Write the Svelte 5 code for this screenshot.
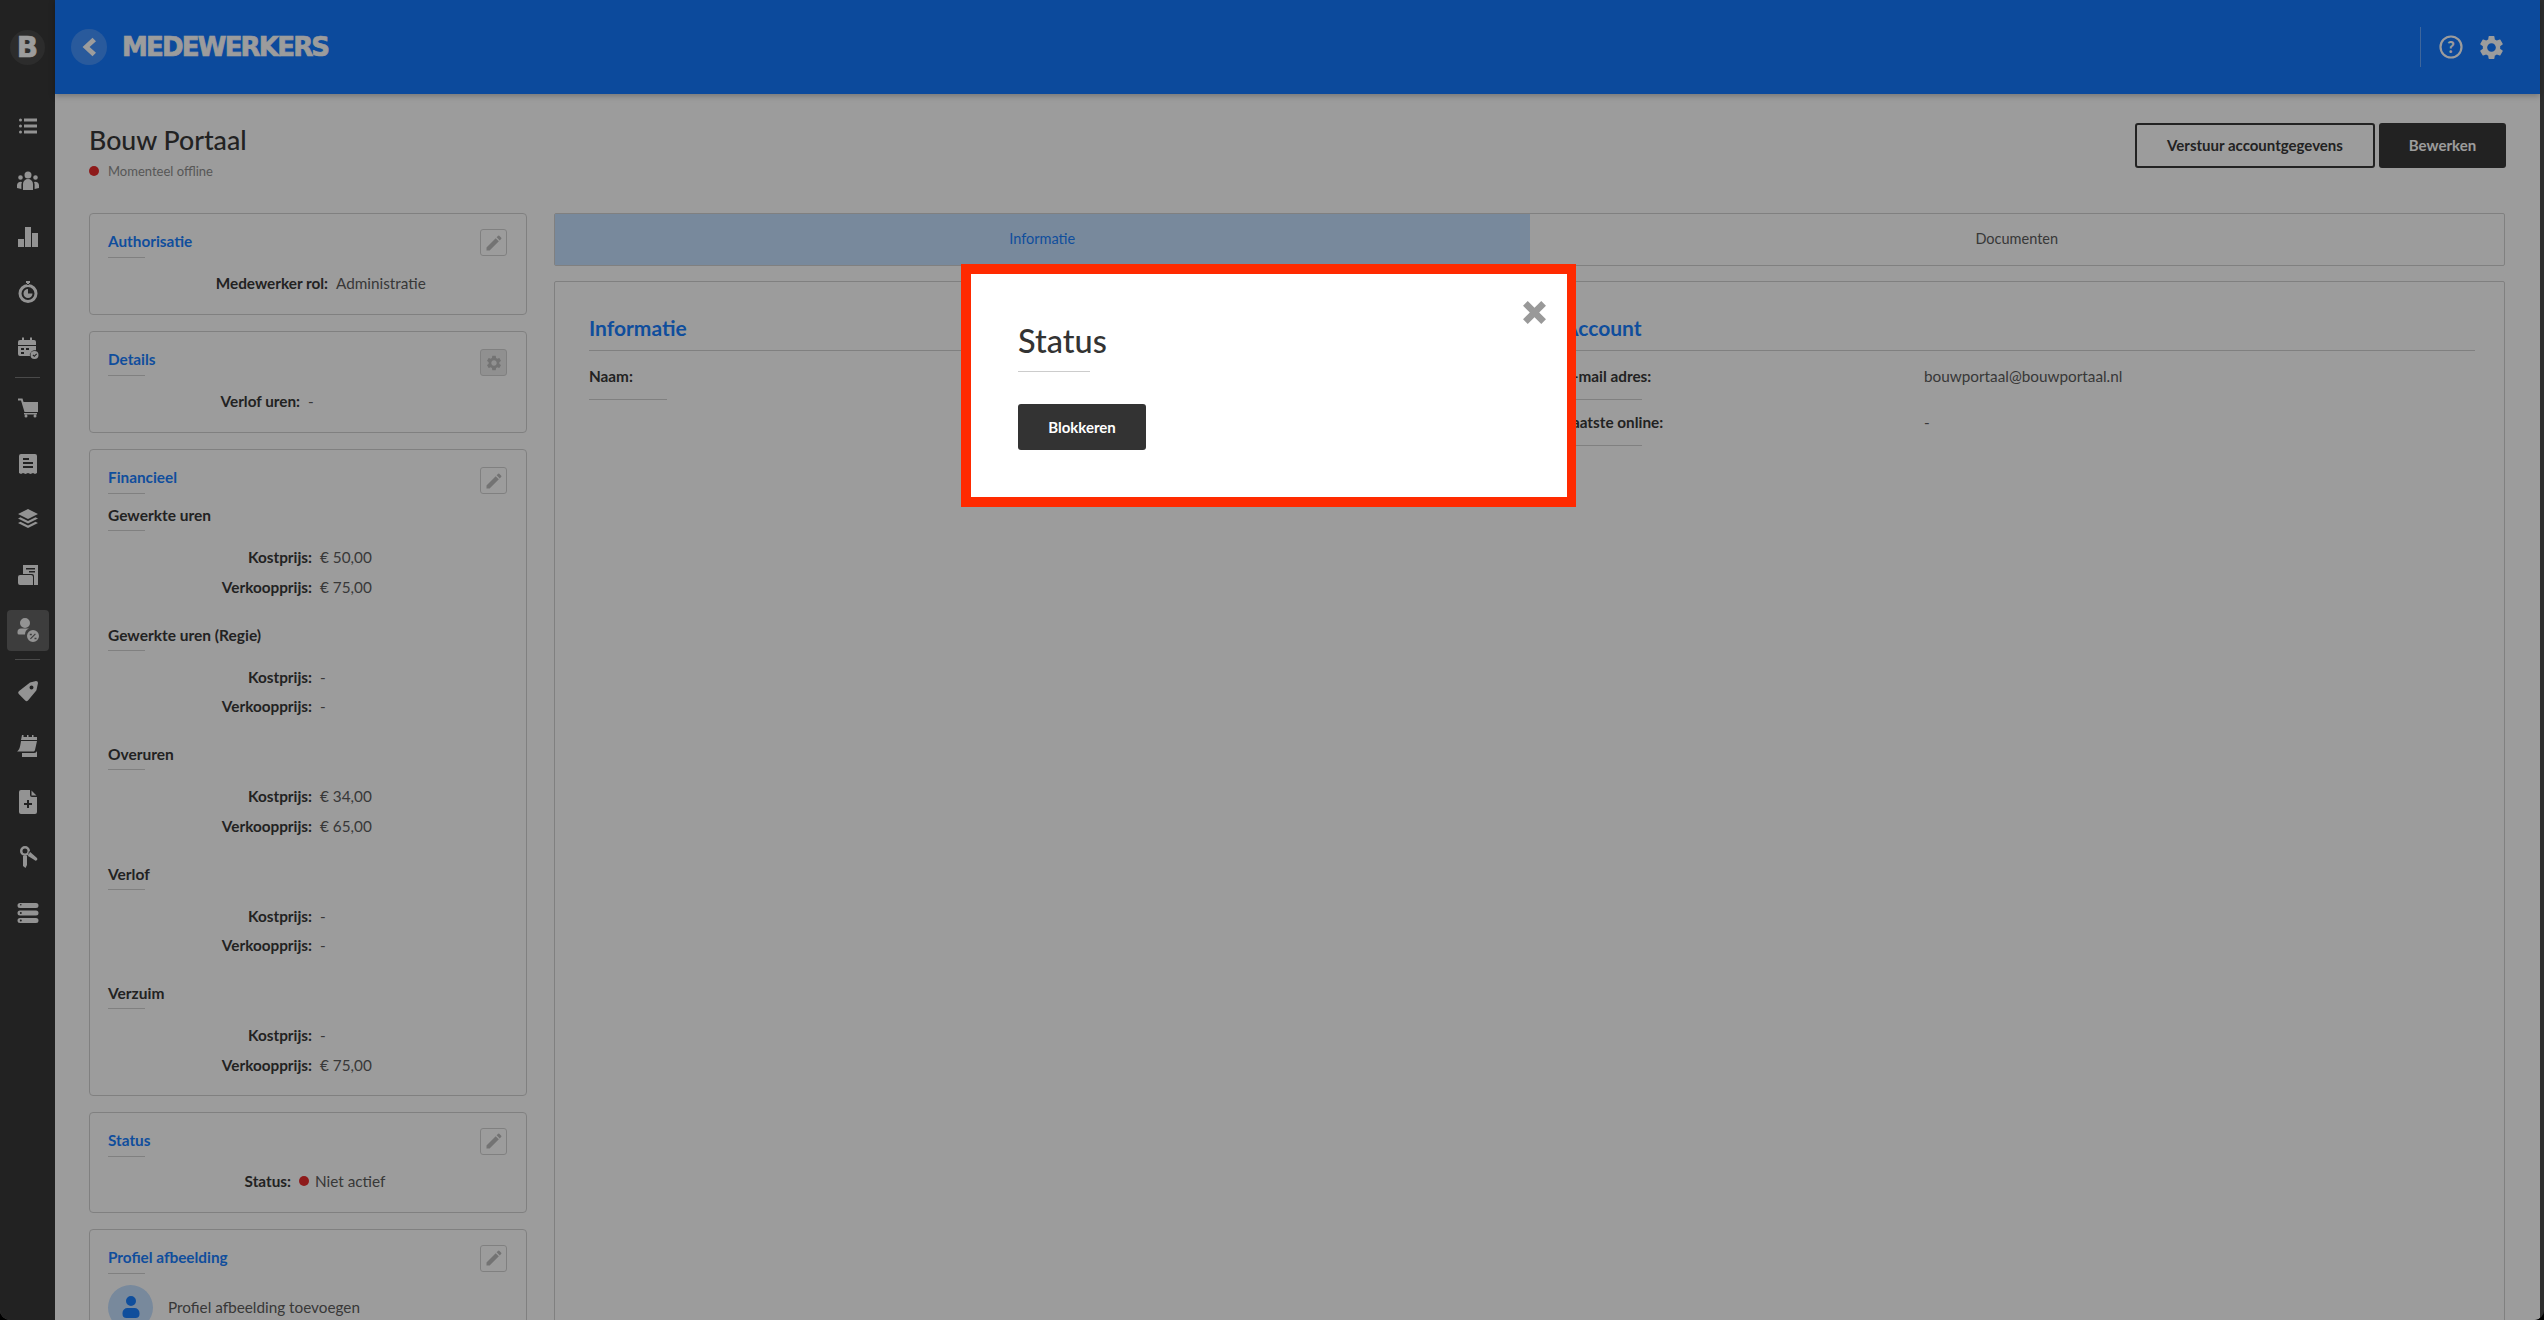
<script>
  const pencil = "M3 17.25V21h3.75L17.81 9.94l-3.75-3.75L3 17.25zM20.71 7.04a1 1 0 0 0 0-1.41l-2.34-2.34a1 1 0 0 0-1.41 0l-1.83 1.83 3.75 3.75 1.83-1.83z";
  const gear = "M19.14 12.94c.04-.3.06-.61.06-.94 0-.32-.02-.64-.07-.94l2.03-1.58c.18-.14.23-.41.12-.61l-1.92-3.32c-.12-.22-.37-.29-.59-.22l-2.39.96c-.5-.38-1.03-.7-1.62-.94l-.36-2.54c-.04-.24-.24-.41-.48-.41h-3.84c-.24 0-.43.17-.47.41l-.36 2.54c-.59.24-1.13.57-1.62.94l-2.39-.96c-.22-.08-.47 0-.59.22L2.74 8.87c-.12.21-.08.47.12.61l2.03 1.58c-.05.3-.09.63-.09.94s.02.64.07.94l-2.03 1.58c-.18.14-.23.41-.12.61l1.92 3.32c.12.22.37.29.59.22l2.39-.96c.5.38 1.03.7 1.62.94l.36 2.54c.05.24.24.41.48.41h3.84c.24 0 .44-.17.47-.41l.36-2.54c.59-.24 1.13-.56 1.62-.94l2.39.96c.22.08.47 0 .59-.22l1.92-3.32c.12-.22.07-.47-.12-.61l-2.01-1.58zM12 15.6c-1.98 0-3.6-1.62-3.6-3.6s1.62-3.6 3.6-3.6 3.6 1.62 3.6 3.6-1.62 3.6-3.6 3.6z";

  const group1 = [
    "M3 6a1.5 1.5 0 1 0 3 0a1.5 1.5 0 1 0-3 0zM3 12a1.5 1.5 0 1 0 3 0a1.5 1.5 0 1 0-3 0zM3 18a1.5 1.5 0 1 0 3 0a1.5 1.5 0 1 0-3 0zM8 4.5h13v3H8zM8 10.5h13v3H8zM8 16.5h13v3H8z",
    "M8.5 6a3.5 3.5 0 1 0 7 0a3.5 3.5 0 1 0-7 0zM7 21v-6a5 5 0 0 1 10 0v6zM2.2 8.5a2.3 2.3 0 1 0 4.6 0a2.3 2.3 0 1 0-4.6 0zM17.2 8.5a2.3 2.3 0 1 0 4.6 0a2.3 2.3 0 1 0-4.6 0zM1 19v-3a3.5 3.5 0 0 1 5-3a7 7 0 0 0-.6 2.5V20zM23 19v-3a3.5 3.5 0 0 0-5-3a7 7 0 0 1 .6 2.5V20z",
    "M2 14h6v8H2zM9 2h6v20H9zM16 8h6v14h-6z",
    "M10 1h4v2h-1v2h-2V3h-1zM2.5 13.500a9.500 9.500 0 1 0 19 0a9.500 9.500 0 1 0-19 0zM5.500 13.500a6.500 6.500 0 1 1 13 0a6.500 6.500 0 1 1-13 0zM12 13.500h4.500a4.500 4.500 0 1 1-4.500-4.500z",
    "M4 4h2V1.500h2V4h6V1.500h2V4h2a2 2 0 0 1 2 2v3H2V6a2 2 0 0 1 2-2zM2 10h18v4.300a5 5 0 0 0-6 5.700H4a2 2 0 0 1-2-2zM5 12v2h3v-2zM5 16v2h3v-2zM10 12v2h3v-2zM14.500 19a4 4 0 1 0 8 0a4 4 0 1 0-8 0zM16.500 19.300l.8-.8 1 1 2-2 .8.8-2.800 2.800z"
  ];
  const group2 = [
    "M2 2.500h4.500L7.500 6H22v10H8.500L5 4.500H2zM8 17h13v1.500H8zM8.500 20a1.500 1.500 0 1 0 3 0a1.500 1.500 0 1 0-3 0zM17.500 20a1.500 1.500 0 1 0 3 0a1.500 1.500 0 1 0-3 0z",
    "M5 2h14a2 2 0 0 1 2 2v17l-2 1-2-1-2.500 1-2.500-1-2.500 1L7 21l-2 1-2-1V4a2 2 0 0 1 2-2zM7 6v2h6V6zM7 10v2h10v-2zM7 14v2h10v-2z",
    "M12 2l10 5-10 5L2 7zM2 11.500l2.500-1.200L12 14l7.500-3.700L22 11.500l-10 5zM2 16l2.500-1.200L12 18.500l7.500-3.700L22 16l-10 5z",
    "M7 2h15v20h-4V13a2 2 0 0 0-2-2H7zM10 5v1.500h9V5zM13 8v1.500h6V8zM2 14a2 2 0 0 1 2-2h11a2 2 0 0 1 2 2v8H4a2 2 0 0 1-2-2z",
    "M4 5a5 5 0 1 0 10 0a5 5 0 1 0-10 0zM1.500 14a3.500 3.500 0 0 1 3.500-3.500h8a6.500 6.500 0 0 0-4 6H3a1.500 1.500 0 0 1-1.500-1.500zM11 18a6 6 0 1 0 12 0a6 6 0 1 0-12 0zM14 20.500l5-5 .8.8-5 5zM13.800 15.800h2v1.500h-2zM18.500 19.800h2v1.500h-2z"
  ];
  const group3 = [
    "M14 3.500L20 2a2 2 0 0 1 2 2l-1.500 7a2 2 0 0 1-.6 1L12 21.500a2 2 0 0 1-2.800 0L2.800 15a2 2 0 0 1 0-2.800zM13.500 8.500a2 2 0 1 0 4 0a2 2 0 1 0-4 0z",
    "M6 1h1.500v2H11V1h1.500v2H16V1h1.500v2H21v3H5zM5 7h16l-2 9c-.3 1-1 1.500-2 1.500H1c2-1.500 3-3 4-10.500zM6 19h12c1.500 0 2.500-1 3-2v6H6z",
    "M5 0h9v5a2 2 0 0 0 2 2h5v15a2 2 0 0 1-2 2H5a2 2 0 0 1-2-2V2a2 2 0 0 1 2-2zM15.500 .5l5 5h-5zM11 10v3H8v2h3v3h2v-3h3v-2h-3v-3z",
    "M4 6a5 5 0 1 0 10 0a5 5 0 1 0-10 0zM6.500 6a2.500 2.500 0 1 1 5 0a2.500 2.500 0 1 1-5 0zM7 11h4v9l-1.500 3L7 21zM13 6l8 7a1.500 1.500 0 0 1-2.500 2L12 11z",
    "M4 2h16a2.500 2.500 0 0 1 0 5H4a2.500 2.500 0 0 1 0-5zM4 3.700a.8.8 0 1 0 1.600 0a.8.8 0 1 0-1.600 0zM4 9.500h16a2.500 2.500 0 0 1 0 5H4a2.500 2.500 0 0 1 0-5zM3.800 12a1 1 0 1 0 2 0a1 1 0 1 0-2 0zM4 17h16a2.500 2.500 0 0 1 0 5H4a2.500 2.500 0 0 1 0-5zM3.800 19.500a1 1 0 1 0 2 0a1 1 0 1 0-2 0z"
  ];
  const groups = [group1, group2, group3];
  const activeIcon = group2[4];

  const finance = [
    { title: "Gewerkte uren", cost: "€ 50,00", sale: "€ 75,00" },
    { title: "Gewerkte uren (Regie)", cost: "-", sale: "-" },
    { title: "Overuren", cost: "€ 34,00", sale: "€ 65,00" },
    { title: "Verlof", cost: "-", sale: "-" },
    { title: "Verzuim", cost: "-", sale: "€ 75,00" }
  ];
</script>

<div class="root">
  <aside class="side">
    <div class="brand"><span class="logo">B</span></div>
    <nav class="nav">
      {#each groups as group, g}
        {#if g > 0}<div class="divider"></div>{/if}
        {#each group as d}
          <div class="navitem">
            <span class="navbtn" class:active={d === activeIcon}>
              <svg viewBox="0 0 24 24" width="24" height="24"><path fill-rule="evenodd" {d} /></svg>
            </span>
          </div>
        {/each}
      {/each}
    </nav>
  </aside>

  <div class="main">
    <header class="top">
      <span class="back">
        <svg viewBox="0 0 24 24" width="28" height="28"><path d="M15 4l3 3-5.500 5 5.500 5-3 3-8.500-8z" /></svg>
      </span>
      <span class="apptitle">MEDEWERKERS</span>
      <span class="topright">
        <svg class="help" viewBox="0 0 24 24" width="24" height="24">
          <circle cx="12" cy="12" r="10.500" />
          <text x="12" y="17.500">?</text>
        </svg>
        <svg class="gear" viewBox="0 0 24 24" width="29" height="29"><path d={gear} /></svg>
      </span>
    </header>

    <div class="content">
      <div class="pagehead">
        <div>
          <h1>Bouw Portaal</h1>
          <div class="offline"><span class="dot"></span>Momenteel offline</div>
        </div>
        <div class="actions">
          <button class="btn outline">Verstuur accountgegevens</button>
          <button class="btn solid">Bewerken</button>
        </div>
      </div>

      <div class="columns">
        <div class="leftcol">
          <section class="card">
            <span class="iconbtn"><svg viewBox="0 0 24 24" width="20" height="20"><path d={pencil} /></svg></span>
            <h3>Authorisatie</h3>
            <div class="rule"></div>
            <div class="row auth"><b>Medewerker rol:</b><span>Administratie</span></div>
          </section>

          <section class="card">
            <span class="iconbtn filled lower"><svg viewBox="0 0 24 24" width="18" height="18"><path d={gear} /></svg></span>
            <h3>Details</h3>
            <div class="rule"></div>
            <div class="row details"><b>Verlof uren:</b><span>-</span></div>
          </section>

          <section class="card">
            <span class="iconbtn lower"><svg viewBox="0 0 24 24" width="20" height="20"><path d={pencil} /></svg></span>
            <h3>Financieel</h3>
            <div class="rule"></div>
            {#each finance as f}
              <div class="fin">
                <h4>{f.title}</h4>
                <div class="rule"></div>
                <div class="row price"><b>Kostprijs:</b><span>{f.cost}</span></div>
                <div class="row price second"><b>Verkoopprijs:</b><span>{f.sale}</span></div>
              </div>
            {/each}
          </section>

          <section class="card">
            <span class="iconbtn"><svg viewBox="0 0 24 24" width="20" height="20"><path d={pencil} /></svg></span>
            <h3>Status</h3>
            <div class="rule"></div>
            <div class="row stat"><b>Status:</b><span class="reddot"></span><span>Niet actief</span></div>
          </section>

          <section class="card">
            <span class="iconbtn"><svg viewBox="0 0 24 24" width="20" height="20"><path d={pencil} /></svg></span>
            <h3>Profiel afbeelding</h3>
            <div class="rule"></div>
            <div class="profile">
              <span class="avatar">
                <svg viewBox="0 0 24 24" width="24" height="24"><path d="M7 6a5 5 0 1 0 10 0a5 5 0 1 0-10 0zM3.500 18a5 5 0 0 1 5-5h7a5 5 0 0 1 5 5v1a4 4 0 0 1-4 4H7.500a4 4 0 0 1-4-4z" /></svg>
              </span>
              <span>Profiel afbeelding toevoegen</span>
            </div>
          </section>
        </div>

        <div class="rightcol">
          <div class="tabs">
            <div class="tab current">Informatie</div>
            <div class="tab">Documenten</div>
          </div>
          <div class="panel">
            <div class="pcol">
              <h2>Informatie</h2>
              <div class="pgrid">
                <div class="plabel">Naam:</div><div class="pval"></div>
              </div>
            </div>
            <div class="pcol">
              <h2>Account</h2>
              <div class="pgrid">
                <div class="plabel">E-mail adres:</div><div class="pval">bouwportaal@bouwportaal.nl</div>
                <div class="plabel">Laatste online:</div><div class="pval">-</div>
              </div>
            </div>
          </div>
        </div>
      </div>
    </div>
  </div>

  <div class="backdrop">
    <div class="modal">
      <span class="close">
        <svg viewBox="0 0 24 24" width="25" height="25"><path d="M5.500 1L12 7.500 18.500 1 23 5.500 16.500 12 23 18.500 18.500 23 12 16.500 5.500 23 1 18.500 7.500 12 1 5.500z" /></svg>
      </span>
      <h2 class="mtitle">Status</h2>
      <div class="mrule"></div>
      <button class="mbtn">Blokkeren</button>
    </div>
  </div>
</div>

<style>
  :global(html), :global(body) { margin: 0; background: #000; }
  .root {
    position: relative;
    display: flex;
    width: 2544px;
    height: 1320px;
    overflow: hidden;
    background: #4a4a4a;
    border-radius: 0 0 10px 10px;
    font-family: Lato, "Open Sans", sans-serif;
    color: #383838;
    font-size: 15.300px;
  }
  .side { width: 55px; flex: none; background: #383838; display: flex; flex-direction: column; color: #f0f0f0; }
  .brand { height: 94px; display: flex; align-items: center; justify-content: center; }
  .logo {
    width: 35px; height: 35px; border-radius: 50%;
    background: #484848;
    display: flex; align-items: center; justify-content: center;
    font: 900 28px "DejaVu Sans", sans-serif; color: #fff;
    -webkit-text-stroke: .6px #fff;
  }
  .nav { padding-top: 4px; display: flex; flex-direction: column; }
  .navitem { height: 55.500px; display: flex; align-items: center; justify-content: center; }
  .navbtn { width: 42px; height: 41px; border-radius: 4px; display: flex; align-items: center; justify-content: center; }
  .navbtn svg { fill: currentColor; }
  .navbtn.active { background: #646464; }
  .divider { height: 1px; margin: 1px 15px 3px; background: #7a7a7a; }

  .main { width: 2485px; flex: none; background: #fff; display: flex; flex-direction: column; }
  .top {
    height: 94px; flex: none;
    background: #1579ff;
    display: flex; align-items: center;
    padding: 0 0 0 16px; box-sizing: border-box;
    box-shadow: 0 2px 6px rgba(0,0,0,.25);
    position: relative;
    color: #fff;
  }
  .back {
    width: 36px; height: 36px; border-radius: 50%;
    background: rgba(255,255,255,.2);
    display: flex; align-items: center; justify-content: center;
  }
  .back svg { fill: #fff; }
  .apptitle {
    margin-left: 15px;
    font: 900 26px/1 "DejaVu Sans", sans-serif;
    letter-spacing: -1.800px;
    -webkit-text-stroke: .7px #fff;
  }
  .topright {
    margin-left: auto;
    width: 120px; height: 40px; box-sizing: border-box;
    border-left: 1px solid rgba(255,255,255,.35);
    display: flex; align-items: center;
    padding-left: 18px;
    gap: 14px;
  }
  .help circle { fill: none; stroke: #fff; stroke-width: 2.200; }
  .help text { fill: #fff; font: 900 16px Lato, sans-serif; text-anchor: middle; }
  .gear { fill: #fff; }

  .content { padding: 0 35px 0 34px; }
  .pagehead { height: 119px; box-sizing: border-box; padding-top: 29px; display: flex; justify-content: space-between; align-items: flex-start; }
  h1 { margin: 0; font-size: 26.700px; line-height: 34px; font-weight: 500; color: #383838; }
  .offline { display: flex; align-items: center; margin-top: 6px; font-size: 13px; line-height: 16px; color: #8f8f8f; }
  .dot { width: 10px; height: 10px; border-radius: 50%; background: #e92b2b; margin-right: 9px; }
  .actions { display: flex; gap: 4px; margin-right: -1px; }
  .btn {
    height: 45px; box-sizing: border-box; border-radius: 3px;
    font: 700 15px Lato, sans-serif;
    padding: 0 0 2px;
  }
  .outline { width: 240px; border: 2px solid #383838; background: #fff; color: #383838; }
  .solid { width: 127px; border: 0; background: #383838; color: #fff; }

  .columns { display: flex; gap: 27px; align-items: flex-start; }
  .leftcol { width: 438px; flex: none; display: flex; flex-direction: column; gap: 16px; }
  .card {
    position: relative;
    box-sizing: border-box;
    border: 1px solid #d2d2d2;
    border-radius: 4px;
    padding: 17px 18px 22px;
  }
  h3 { margin: 0; font-size: 15.300px; line-height: 20px; font-weight: 700; color: #1a80ff; }
  h4 { margin: 0; font-size: 15.500px; line-height: 18px; font-weight: 700; color: #383838; }
  .rule { width: 37px; height: 1px; margin-top: 6px; background: #d2d2d2; }
  .iconbtn {
    position: absolute; top: 15px; right: 19px;
    width: 25px; height: 25px; border: 1px solid #d2d2d2; border-radius: 3px;
    display: flex; align-items: center; justify-content: center;
  }
  .iconbtn.lower { top: 17px; }
  .iconbtn svg { fill: #bdbdbd; }
  .iconbtn.filled { background: #ececec; }
  .row { display: flex; align-items: center; margin-top: 16px; line-height: 18px; font-size: 15.300px; color: #5c5c5c; }
  .row b { color: #383838; font-weight: 700; text-align: right; margin-right: 8px; flex: none; }
  .auth b { width: 220px; }
  .details b { width: 192px; }
  .stat b { width: 183px; }
  .stat { margin-top: 15px; }
  .price b { width: 204px; }
  .price { margin-top: 17px; }
  .price.second { margin-top: 11.500px; }
  .fin { margin-top: 12px; margin-bottom: 30px; }
  .fin:last-of-type { margin-bottom: -1px; }
  .reddot { width: 10px; height: 10px; border-radius: 50%; background: #e92b2b; margin: 0 6px 0 0; }
  .profile { display: flex; align-items: center; gap: 15px; margin-top: 11px; font-size: 15.300px; color: #5c5c5c; }
  .avatar { width: 45px; height: 45px; border-radius: 50%; background: #c4e0ff; display: flex; align-items: center; justify-content: center; }
  .avatar svg { fill: #1a80ff; }

  .rightcol { flex: 1; min-width: 0; }
  .tabs { display: flex; height: 53px; box-sizing: border-box; border: 1px solid #d2d2d2; border-radius: 2px; }
  .tab { flex: 1; display: flex; align-items: center; justify-content: center; font-size: 14.500px; color: #5c5c5c; padding-bottom: 2px; box-sizing: border-box; }
  .tab.current { background: #c4e0ff; color: #1a80ff; }
  .panel {
    margin-top: 15px; height: 1200px; box-sizing: border-box;
    border: 1px solid #d2d2d2; border-radius: 2px;
    padding: 34px 30px 0 34px;
    display: grid; grid-template-columns: 911px 911px; gap: 64px;
  }
  .panel h2 {
    margin: 0; font-size: 21px; line-height: 24px; font-weight: 700; color: #1a80ff;
    padding-bottom: 10px; border-bottom: 1px solid #d2d2d2;
  }
  .pgrid { display: grid; grid-template-columns: 360px 1fr; margin-top: 16px; row-gap: 13px; font-size: 15.300px; line-height: 18px; }
  .plabel { font-weight: 700; color: #383838; padding-bottom: 15px; position: relative; }
  .plabel::after { content: ""; position: absolute; left: 0; bottom: 0; width: 78px; height: 1px; background: #d2d2d2; }
  .pval { color: #5c5c5c; }

  .backdrop {
    position: absolute; inset: 0;
    background: rgba(0,0,0,.39);
    display: flex; justify-content: center; align-items: flex-start;
    padding: 264px 7px 0 0; box-sizing: border-box;
  }
  .modal {
    position: relative;
    width: 615px; height: 243px; box-sizing: border-box;
    background: #fff;
    border: solid #ff2a00; border-width: 10px 9px 10px 10px;
    padding: 49px 0 0 47px;
  }
  .mtitle { margin: 0; font-size: 32.500px; line-height: 36px; font-weight: 500; color: #333; }
  .mrule { width: 72px; height: 1px; margin-top: 12px; background: #ccc; }
  .mbtn {
    display: block; margin-top: 32px;
    width: 128px; height: 46px; border: 0; border-radius: 3px;
    background: #333; color: #fff;
    font: 700 15px Lato, sans-serif;
  }
  .close { position: absolute; top: 26px; right: 20px; display: flex; }
  .close svg { fill: #999; }
</style>
